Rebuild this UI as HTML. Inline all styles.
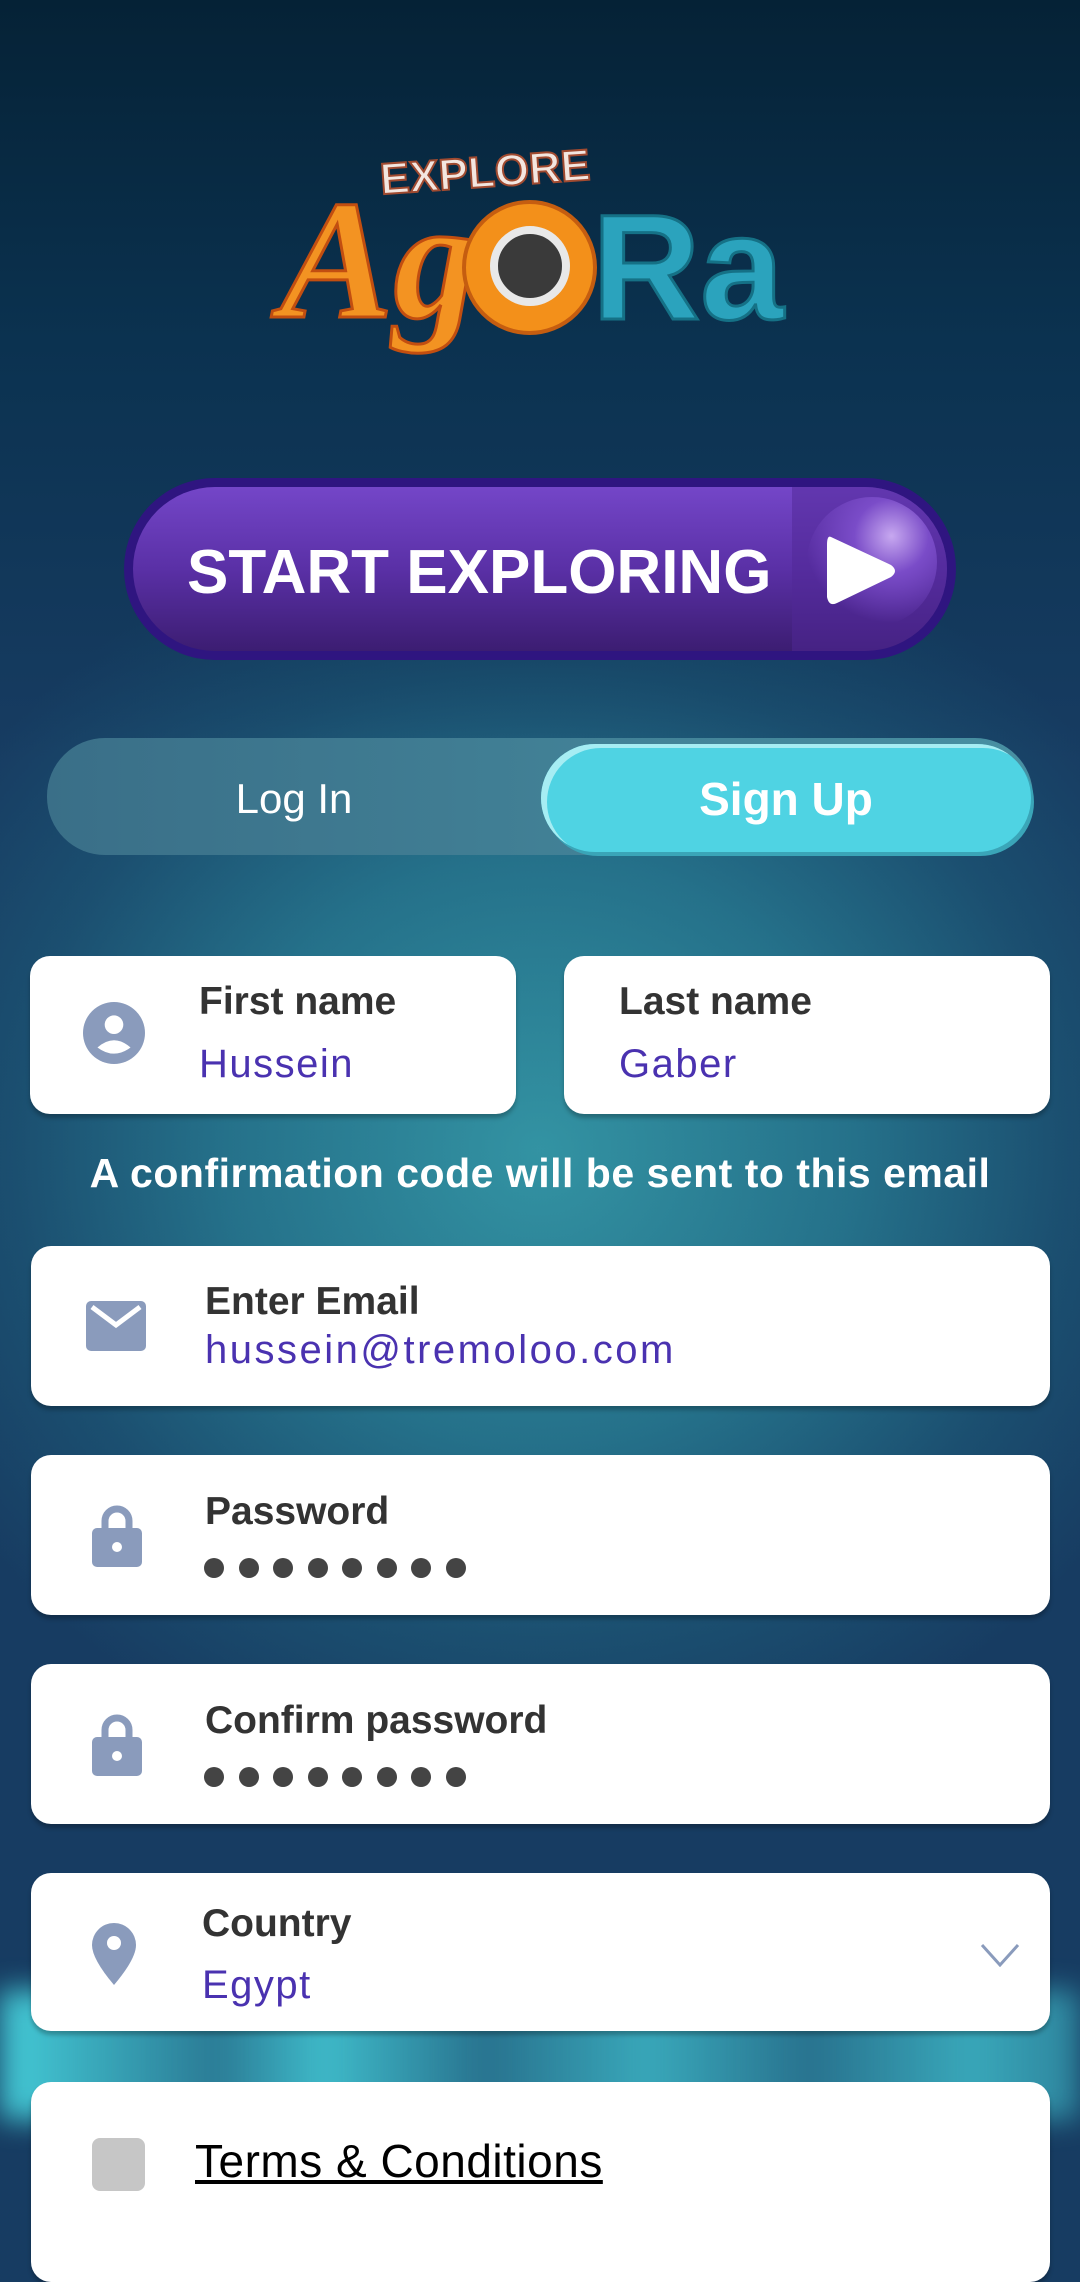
<!DOCTYPE html>
<html><head><meta charset="utf-8"><style>
*{margin:0;padding:0;box-sizing:border-box}
body{width:1080px;height:2244px;overflow:hidden;position:relative;font-family:"Liberation Sans",sans-serif;
background:radial-gradient(ellipse 700px 650px at 540px 1150px,#3393a3 0%,#25718a 45%,#1b4f70 75%,#173c62 100%),#0a2a40;}
.top{position:absolute;left:0;top:0;width:1080px;height:760px;background:linear-gradient(#052236 0%,#0b3250 45%,rgba(16,70,100,0) 100%)}
.card{position:absolute;background:#fff;border-radius:20px;box-shadow:0 4px 4px rgba(0,0,0,.25)}
.lab{position:absolute;font-weight:bold;color:#333;font-size:39px}
.val{position:absolute;color:#4a32b0;font-size:40px;letter-spacing:1.5px}
.dots{position:absolute;display:flex;gap:14.5px}
.dots i{display:block;width:20px;height:20px;border-radius:50%;background:#444}
.ic{position:absolute}
</style></head><body>
<div class="top"></div>
<div style="position:absolute;left:0;top:1990px;width:1080px;height:130px;background:linear-gradient(90deg,rgba(80,240,245,.8),rgba(80,240,245,.35) 20%,rgba(80,240,245,.7) 30%,rgba(80,240,245,.3) 45%,rgba(80,240,245,.6) 60%,rgba(80,240,245,.3) 75%,rgba(80,240,245,.6) 90%,rgba(80,240,245,.4));filter:blur(14px)"></div>
<!-- logo -->
<div style="position:absolute;left:380px;top:148px;font-size:44px;font-weight:bold;color:#f3e6e0;transform:rotate(-4deg);-webkit-text-stroke:2px #a04a30">EXPLORE</div>
<div style="position:absolute;left:280px;top:175px;font-size:170px;font-weight:bold;color:#f39322;font-family:'Liberation Serif',serif;font-style:italic;-webkit-text-stroke:3px #c24e10;line-height:1">Ag</div>
<div style="position:absolute;left:462px;top:200px;width:135px;height:135px;border-radius:50%;background:#f3901a;border:4px solid #c55d10"></div>
<div style="position:absolute;left:490px;top:226px;width:80px;height:80px;border-radius:50%;background:#3a3a3a;border:8px solid #e8e8e8"></div>
<div style="position:absolute;left:592px;top:192px;font-size:150px;font-weight:bold;color:#2ba3bd;-webkit-text-stroke:3px #157186;line-height:1">Ra</div>
<!-- start button -->
<div style="position:absolute;left:124px;top:478px;width:832px;height:182px;border-radius:91px;background:#2f1580;padding:9px">
 <div style="width:100%;height:100%;border-radius:82px;background:linear-gradient(#7446c8,#5a30a6 50%,#3c1d72);position:relative;overflow:hidden">
  <div style="position:absolute;right:0;top:0;width:155px;height:100%;background:rgba(80,40,150,.5)"></div>
  <div style="position:absolute;right:10px;top:10px;width:130px;height:130px;border-radius:50%;background:radial-gradient(circle at 65% 30%,#c7a8f0 0%,#7a4cc8 30%,rgba(90,50,160,0) 70%)"></div>
  <div style="position:absolute;left:54px;top:50px;color:#fff;font-weight:bold;font-size:62px;">START EXPLORING</div>
  <svg style="position:absolute;left:690px;top:44px" width="80" height="80" viewBox="0 0 80 80"><path d="M8 6 Q4 4 4 14 L4 66 Q6 76 14 72 L68 46 Q76 40 68 34 Z" fill="#fff"/></svg>
 </div>
</div>
<!-- toggle -->
<div style="position:absolute;left:47px;top:738px;width:986px;height:117px;border-radius:58px;background:linear-gradient(90deg,#3a6f88,#4890a2)"></div>
<div style="position:absolute;left:47px;top:775px;width:494px;text-align:center;color:#fff;font-size:42px">Log In</div>
<div style="position:absolute;left:541px;top:744px;width:490px;height:108px;border-radius:54px;background:#4fd3e3;box-shadow:inset 6px 4px 0 #a6edf3,3px 4px 0 #3aa5b8"></div>
<div style="position:absolute;left:541px;top:772px;width:490px;text-align:center;color:#fff;font-weight:bold;font-size:46px">Sign Up</div>
<!-- names -->
<div class="card" style="left:30px;top:956px;width:486px;height:158px"></div>
<svg class="ic" style="left:83px;top:1002px" width="62" height="62" viewBox="0 0 60 60"><circle cx="30" cy="30" r="30" fill="#8a9bbc"/><circle cx="30" cy="22" r="9" fill="#fff"/><path d="M14 44 Q30 30 46 44 Q30 56 14 44Z" fill="#fff"/></svg>
<div class="lab" style="left:199px;top:980px">First name</div>
<div class="val" style="left:199px;top:1042px">Hussein</div>
<div class="card" style="left:564px;top:956px;width:486px;height:158px"></div>
<div class="lab" style="left:619px;top:980px">Last name</div>
<div class="val" style="left:619px;top:1042px">Gaber</div>
<div style="position:absolute;left:0;top:1150px;width:1080px;text-align:center;color:#fff;font-weight:bold;font-size:41px;letter-spacing:0.5px">A confirmation code will be sent to this email</div>
<!-- email -->
<div class="card" style="left:31px;top:1246px;width:1019px;height:160px"></div>
<svg class="ic" style="left:86px;top:1301px" width="60" height="50" viewBox="0 0 60 50"><rect width="60" height="50" rx="5" fill="#8a9bbc"/><path d="M6 6 L30 24 L54 6" stroke="#fff" stroke-width="5" fill="none"/></svg>
<div class="lab" style="left:205px;top:1280px">Enter Email</div>
<div class="val" style="left:205px;top:1328px;letter-spacing:2.5px">hussein@tremoloo.com</div>
<!-- password -->
<div class="card" style="left:31px;top:1455px;width:1019px;height:160px"></div>
<svg class="ic" style="left:92px;top:1503px" width="50" height="64" viewBox="0 0 50 64"><path d="M13 28 V18 a12 12 0 0 1 24 0 V28" stroke="#8a9bbc" stroke-width="7" fill="none"/><rect y="25" width="50" height="39" rx="5" fill="#8a9bbc"/><circle cx="25" cy="44" r="5" fill="#fff"/></svg>
<div class="lab" style="left:205px;top:1490px">Password</div>
<div class="dots" style="left:204px;top:1558px"><i></i><i></i><i></i><i></i><i></i><i></i><i></i><i></i></div>
<!-- confirm -->
<div class="card" style="left:31px;top:1664px;width:1019px;height:160px"></div>
<svg class="ic" style="left:92px;top:1712px" width="50" height="64" viewBox="0 0 50 64"><path d="M13 28 V18 a12 12 0 0 1 24 0 V28" stroke="#8a9bbc" stroke-width="7" fill="none"/><rect y="25" width="50" height="39" rx="5" fill="#8a9bbc"/><circle cx="25" cy="44" r="5" fill="#fff"/></svg>
<div class="lab" style="left:205px;top:1699px">Confirm password</div>
<div class="dots" style="left:204px;top:1767px"><i></i><i></i><i></i><i></i><i></i><i></i><i></i><i></i></div>
<!-- country -->
<div class="card" style="left:31px;top:1873px;width:1019px;height:158px"></div>
<svg class="ic" style="left:92px;top:1923px" width="44" height="62" viewBox="0 0 44 62"><path d="M22 0 A22 22 0 0 1 44 22 Q44 36 22 62 Q0 36 0 22 A22 22 0 0 1 22 0Z" fill="#8a9bbc"/><circle cx="22" cy="20" r="7" fill="#fff"/></svg>
<div class="lab" style="left:202px;top:1902px">Country</div>
<div class="val" style="left:202px;top:1963px">Egypt</div>
<svg class="ic" style="left:980px;top:1943px" width="40" height="24" viewBox="0 0 40 24"><path d="M2 2 L20 22 L38 2" stroke="#8a9bbc" stroke-width="3" fill="none"/></svg>
<!-- terms -->
<div class="card" style="left:31px;top:2082px;width:1019px;height:200px"></div>
<div style="position:absolute;left:92px;top:2138px;width:53px;height:53px;border-radius:8px;background:#c6c6c6"></div>
<div style="position:absolute;left:195px;top:2134px;font-size:46px;color:#000;text-decoration:underline;letter-spacing:0.5px">Terms &amp; Conditions</div>
</body></html>
